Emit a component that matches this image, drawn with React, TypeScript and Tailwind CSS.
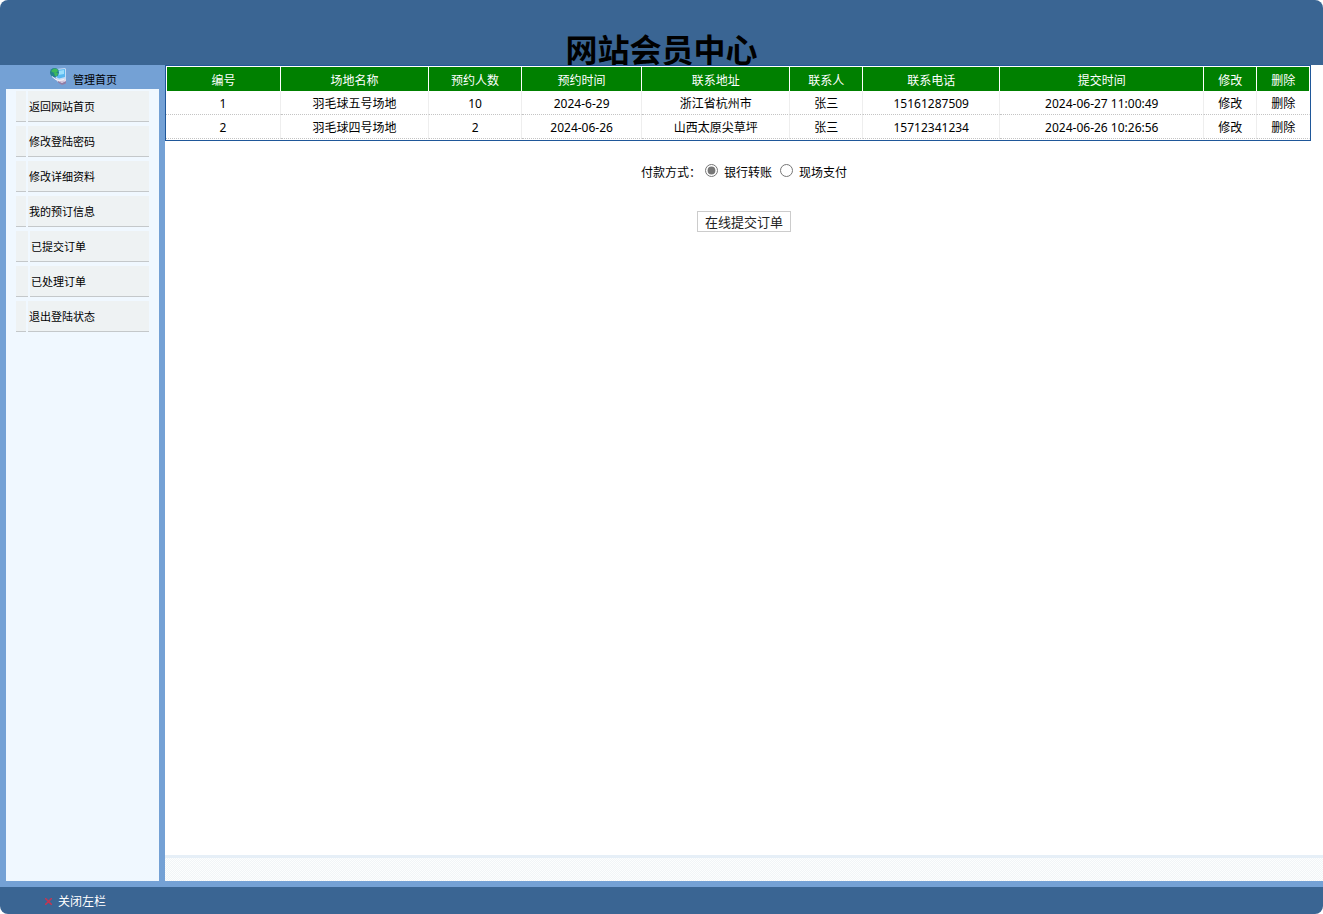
import { useState } from 'react'

const menuItems = [
  { label: '返回网站首页', nested: false },
  { label: '修改登陆密码', nested: false },
  { label: '修改详细资料', nested: false },
  { label: '我的预订信息', nested: false },
  { label: '已提交订单', nested: true },
  { label: '已处理订单', nested: true },
  { label: '退出登陆状态', nested: false },
]

const columns = [
  { label: '编号', width: 'w-[115px]' },
  { label: '场地名称', width: 'w-[148px]' },
  { label: '预约人数', width: 'w-[93px]' },
  { label: '预约时间', width: 'w-[120px]' },
  { label: '联系地址', width: 'w-[148px]' },
  { label: '联系人', width: 'w-[73px]' },
  { label: '联系电话', width: 'w-[137px]' },
  { label: '提交时间', width: 'w-[204px]' },
  { label: '修改', width: 'w-[53px]' },
  { label: '删除', width: 'w-[53px]' },
]

const orders = [
  ['1', '羽毛球五号场地', '10', '2024-6-29', '浙江省杭州市', '张三', '15161287509', '2024-06-27 11:00:49'],
  ['2', '羽毛球四号场地', '2', '2024-06-26', '山西太原尖草坪', '张三', '15712341234', '2024-06-26 10:26:56'],
]

const payments = ['银行转账', '现场支付']

function ComputerIcon() {
  return (
    <svg width="17" height="17" viewBox="0 0 17 17" aria-hidden="true">
      <path d="M4 10l4 2 7-2 1 1v4l-4 1.500-4-2.500z" fill="#e2dae8" />
      <path d="M8 13l4 2 4-2v2.500l-4 1.500-4-2.500z" fill="#8f7da6" />
      <path d="M9 13l3 1 2-1" fill="none" stroke="#c9bcd6" />
      <path d="M6 1l9-1 1 1v10l-7 1.500-3-2z" fill="#c7dcf4" />
      <path d="M7 2l8-1v8l-6 1.500-2-1z" fill="#58b8f0" />
      <path d="M8 3l6-1v4L8 7z" fill="#9adffc" />
      <circle cx="4.500" cy="4.500" r="4.500" fill="#23828c" />
      <path d="M1 3l3-2.500 3 .5 1 2-2 2-3-.5zM4 5l4 0-1 3-2 0z" fill="#3eb95a" />
      <path d="M2 8.500l3 2.500 4 1.500 5-1" fill="none" stroke="#f4f1f8" />
    </svg>
  )
}

function Sidebar() {
  return (
    <aside className="flex w-[165px] shrink-0 flex-col bg-[#74a1d5] px-1.5 text-[11px]">
      <a href="#home" className="flex h-6 items-start pt-[3px] pl-11">
        <ComputerIcon />
        <span className="pt-[5px] pl-1.5">管理首页</span>
      </a>
      <nav className="flex-1 bg-[#f0f8ff] px-2.5 pt-0.5">
        <ul className="space-y-1">
          {menuItems.map((item) => (
            <li key={item.label} className="flex h-[31px] gap-0.5">
              <span className={`border-b border-[#c4c8ca] bg-[#eef2f3] ${item.nested ? 'w-3' : 'w-2.5'}`} />
              <a href="#menu" className="flex flex-1 items-center border-b border-[#c4c8ca] bg-[#eef2f3] pt-0.5 pl-px">
                {item.label}
              </a>
            </li>
          ))}
        </ul>
      </nav>
    </aside>
  )
}

function OrderTable() {
  return (
    <div className="w-[99%] border border-[#1f5799] bg-white pb-px">
      <table className="w-full table-fixed border-separate border-spacing-0 text-center leading-4">
        <thead>
          <tr className="h-[25px] text-white">
            {columns.map((col) => (
              <th
                key={col.label}
                className={`border-t border-r border-white bg-[#008000] p-0 pt-1 font-normal first:border-l ${col.width}`}
              >
                {col.label}
              </th>
            ))}
          </tr>
        </thead>
        <tbody>
          {orders.map((order) => (
            <tr
              key={order[0]}
              className="h-6 [&>td]:border-r [&>td]:border-b [&>td]:border-r-[#eeeeee] [&>td]:border-b-[#c4c4c4] [&>td]:[border-bottom-style:dotted] [&>td]:p-0 [&>td]:pt-0.5 [&>td:last-child]:border-r-white"
            >
              {order.map((value, i) => (
                <td key={i}>{value}</td>
              ))}
              <td>
                <a href="#edit">修改</a>
              </td>
              <td>
                <a href="#delete">删除</a>
              </td>
            </tr>
          ))}
        </tbody>
      </table>
    </div>
  )
}

export default function App() {
  const [payment, setPayment] = useState(payments[0])
  const [open, setOpen] = useState(true)

  return (
    <div className="flex min-h-screen flex-col overflow-hidden rounded-lg bg-white font-['Noto_Sans','Noto_Sans_CJK_SC',sans-serif] text-xs text-black">
      <header className="flex h-[65px] items-end justify-center bg-[#3a6593]">
        <h1 className="text-[32px] leading-[30px] font-bold">网站会员中心</h1>
      </header>

      <div className="flex flex-1 border-b-[6px] border-[#74a1d5]">
        {open && <Sidebar />}
        <main className="flex min-w-0 flex-1 flex-col">
          <OrderTable />
          <form className="flex flex-1 flex-col items-center" onSubmit={(e) => e.preventDefault()}>
            <div role="radiogroup" aria-labelledby="payment-label" className="mt-[23px] flex items-center">
              <span id="payment-label" className="mr-1">
                付款方式：
              </span>
              {payments.map((name) => (
                <label key={name} className="mr-2 flex items-center gap-1.5 last:mr-0">
                  <input
                    type="radio"
                    name="payment"
                    className="mb-1 size-[13px] accent-[#767676]"
                    checked={payment === name}
                    onChange={() => setPayment(name)}
                  />
                  {name}
                </label>
              ))}
            </div>
            <button type="submit" className="mt-[30px] h-[21px] border border-[#cccccc] bg-white px-[7px] text-[13px] leading-4 text-[#222222]">
              在线提交订单
            </button>
          </form>
          <div className="h-[26px] bg-[repeating-conic-gradient(#f1f5f7_0_25%,#fdfefe_0_50%)] bg-size-[2px_2px]">
            <div className="h-[3px] bg-[#e6eff7]" />
          </div>
        </main>
      </div>

      <footer className="flex h-[27px] items-center bg-[#3a6593] pt-0.5 pl-[45px]">
        <button type="button" className="flex items-center gap-1.5 text-white" onClick={() => setOpen(!open)}>
          <svg width="7" height="7" viewBox="0 0 7 7" aria-hidden="true">
            <path d="M0 0l7 7M7 0L0 7" stroke="#c73550" strokeWidth="1.500" />
          </svg>
          关闭左栏
        </button>
      </footer>
    </div>
  )
}
